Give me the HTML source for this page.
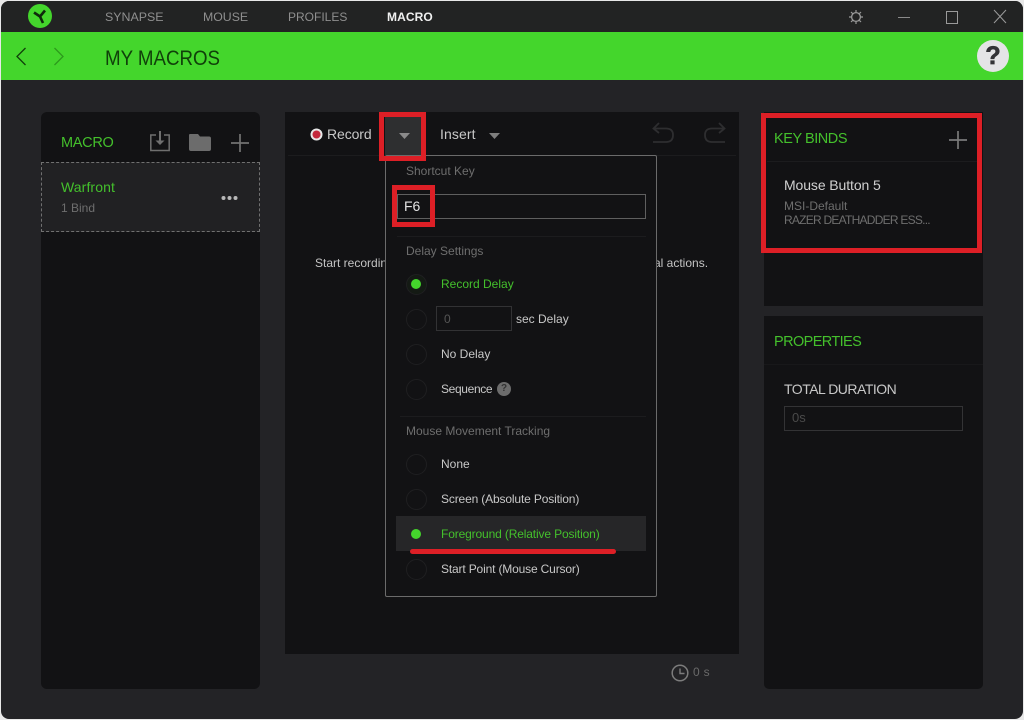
<!DOCTYPE html>
<html><head><meta charset="utf-8"><title>Macro</title>
<style>
html,body{margin:0;padding:0;background:#d8d8d8;}
#w{position:relative;width:1024px;height:720px;overflow:hidden;background:#e8e8e8;font-family:"Liberation Sans",sans-serif;}
#w div,#w span.t{position:absolute;white-space:nowrap;}
.t{position:absolute;white-space:nowrap;line-height:16px;}
.g{color:#44c02c}
.w{color:#c8c8c8}
.m{color:#6e6e6e}
.p{background:#121214}
.r{border:1px solid #1f1f21;border-radius:50%;width:19px;height:19px;box-sizing:content-box}
.rb{border:5px solid #dd1f26;box-sizing:border-box;background:transparent}
.dot{background:#44d62c;border-radius:50%;width:10px;height:10px}
svg{position:absolute;overflow:visible}
</style></head><body>
<div id="w">
<div style="left:1px;top:1px;width:1022px;height:718px;background:#232326;border-radius:8px;overflow:hidden;">
  <div style="left:0;top:0;width:1022px;height:31px;background:#222323"></div>
  <div style="left:0;top:31px;width:1022px;height:48px;background:#44d62c"></div>
</div>

<!-- logo -->
<svg style="left:28px;top:4px" width="24" height="24" viewBox="0 0 24 24"><circle cx="12" cy="12" r="12" fill="#44d62c"/><path d="M12 12.500L6 8.500M12 12.500L17 6.500M12 12.500L15 19" stroke="#0f2a0c" stroke-width="2.600" fill="none"/></svg>

<span class="t" style="left:105px;top:9px;font-size:12.400px;color:#8f8f8f">SYNAPSE</span>
<span class="t" style="left:203px;top:9px;font-size:12.300px;color:#8f8f8f">MOUSE</span>
<span class="t" style="left:288px;top:9px;font-size:12px;color:#8f8f8f">PROFILES</span>
<span class="t" style="left:387px;top:9px;font-size:12px;color:#f0f0f0;font-weight:bold;letter-spacing:.1px">MACRO</span>

<!-- window controls -->
<svg style="left:849px;top:10px" width="14" height="14" viewBox="0 0 14 14"><circle cx="7" cy="7" r="4.400" fill="none" stroke="#9a9a9a" stroke-width="1.300"/><path d="M7 0v2.200M7 11.800V14M0 7h2.200M11.800 7H14M2 2l1.600 1.600M10.400 10.400L12 12M2 12l1.600-1.600M10.400 3.600L12 2" stroke="#9a9a9a" stroke-width="1.200"/></svg>
<div style="left:898px;top:17px;width:12px;height:1px;background:#8a8a8a"></div>
<div style="left:946px;top:11px;width:10px;height:11px;border:1px solid #9a9a9a"></div>
<svg style="left:994px;top:10px" width="12" height="13" viewBox="0 0 12 13"><path d="M0 0L12 13M12 0L0 13" stroke="#9a9a9a" stroke-width="1"/></svg>

<!-- green bar -->
<svg style="left:16px;top:47px" width="10" height="20" viewBox="0 0 10 20"><path d="M9.500 1L1 9.500L9.500 18" stroke="#10400a" stroke-width="1.300" fill="none"/></svg>
<svg style="left:54px;top:47px" width="10" height="20" viewBox="0 0 10 20"><path d="M.5 1L9 9.500L.5 18" stroke="#2c9a1c" stroke-width="1.300" fill="none"/></svg>
<span class="t" style="left:105px;top:46px;font-size:21.500px;line-height:24px;color:#10400a;transform:scaleX(.87);transform-origin:0 0">MY MACROS</span>
<svg style="left:977px;top:40px" width="32" height="32" viewBox="0 0 32 32"><circle cx="16" cy="16" r="16" fill="#e4e4e6"/></svg>
<span class="t" style="left:977px;top:40px;width:32px;text-align:center;font-size:25px;line-height:32px;font-weight:bold;color:#333336;-webkit-text-stroke:.7px #333336">?</span>

<!-- left panel -->
<div class="p" style="left:41px;top:112px;width:219px;height:577px;border-radius:6px"></div>
<span class="t g" style="left:61px;top:135px;font-size:14.500px;letter-spacing:-.3px">MACRO</span>
<svg style="left:150px;top:130px" width="20" height="22" viewBox="0 0 20 22"><path d="M6 5H.8V20.500H19.200V5H14" stroke="#6f6f6f" stroke-width="1.500" fill="none"/><path d="M10 1V12" stroke="#6f6f6f" stroke-width="2"/><path d="M5.500 10.500H14.500L10 15Z" fill="#6f6f6f"/></svg>
<svg style="left:189px;top:134px" width="22" height="18" viewBox="0 0 22 18"><path d="M1 0H9L11 2.500H20Q22 2.500 22 4.500V15Q22 17 20 17H2Q0 17 0 15V1Q0 0 1 0Z" fill="#6c6c6c"/></svg>
<svg style="left:231px;top:134px" width="18" height="18" viewBox="0 0 18 18"><path d="M9 0V18M0 9H18" stroke="#727272" stroke-width="1.700"/></svg>
<div style="left:41px;top:162px;width:219px;height:70px;box-sizing:border-box;border:1px dashed #707070;background:#212123"></div>
<span class="t g" style="left:61px;top:179px;font-size:14px;letter-spacing:.1px">Warfront</span>
<span class="t m" style="left:61px;top:200px;font-size:12px;">1 Bind</span>
<svg style="left:221px;top:195px" width="17" height="6" viewBox="0 0 17 6"><circle cx="2.500" cy="3" r="2" fill="#b8b8b8"/><circle cx="8.500" cy="3" r="2" fill="#b8b8b8"/><circle cx="14.500" cy="3" r="2" fill="#b8b8b8"/></svg>

<!-- center panel -->
<div class="p" style="left:285px;top:112px;width:454px;height:542px"></div>
<div style="left:288px;top:155px;width:448px;height:1px;background:#1c1c1e"></div>
<svg style="left:310px;top:128px" width="13" height="13" viewBox="0 0 13 13"><circle cx="6.500" cy="6.500" r="6" fill="#e8e8e8"/><circle cx="6.500" cy="6.500" r="4" fill="#c4283c"/></svg>
<span class="t" style="left:327px;top:126px;font-size:14px;color:#c8c8c8;letter-spacing:-.1px">Record</span>
<div style="left:385px;top:117px;width:36px;height:38px;background:#2e2f30"></div>
<svg style="left:399px;top:133px" width="11" height="6" viewBox="0 0 11 6"><path d="M0 0H11L5.500 6Z" fill="#8a8a8a"/></svg>
<span class="t" style="left:440px;top:126px;font-size:14px;color:#c8c8c8;letter-spacing:.1px">Insert</span>
<svg style="left:489px;top:133px" width="11" height="6" viewBox="0 0 11 6"><path d="M0 0H11L5.500 6Z" fill="#7e7e7e"/></svg>
<svg style="left:652px;top:122px" width="22" height="22" viewBox="0 0 22 22"><path d="M7 1L1.500 6.500L7 11M2 6.500H14Q21 6.500 21 13Q21 20 14 20H1" stroke="#2e2e30" stroke-width="1.800" fill="none"/></svg>
<svg style="left:704px;top:122px" width="22" height="22" viewBox="0 0 22 22"><path d="M15 1L20.500 6.500L15 11M20 6.500H8Q1 6.500 1 13Q1 20 8 20H21" stroke="#2e2e30" stroke-width="1.800" fill="none"/></svg>
<span class="t" style="left:315px;top:255px;font-size:12px;color:#c4c4c4">Start recording</span>
<span class="t" style="left:654px;top:255px;font-size:12px;color:#c4c4c4">al actions.</span>
<svg style="left:671px;top:664px" width="18" height="18" viewBox="0 0 18 18"><circle cx="9" cy="9" r="7.800" fill="none" stroke="#7c7c7c" stroke-width="1.500"/><path d="M9 4.500V9.500H13.500" stroke="#7c7c7c" stroke-width="1.400" fill="none"/></svg>
<span class="t" style="left:693px;top:664px;font-size:12px;color:#6a6a6a;letter-spacing:.3px">0 s</span>

<!-- dropdown -->
<div style="left:385px;top:155px;width:272px;height:442px;box-sizing:border-box;border:1px solid #6b6b6b;border-radius:2px;background:#121214"></div>
<span class="t m" style="left:406px;top:163px;font-size:12px">Shortcut Key</span>
<div style="left:397px;top:194px;width:249px;height:25px;box-sizing:border-box;border:1px solid #5f5f5f"></div>
<span class="t" style="left:404px;top:198px;font-size:14px;color:#e2e2e2">F6</span>
<div style="left:397px;top:236px;width:249px;height:1px;background:#1c1c1e"></div>
<span class="t m" style="left:406px;top:243px;font-size:12px">Delay Settings</span>

<div class="r" style="left:406px;top:274px;background:#141a14"></div>
<div class="dot" style="left:411px;top:279px"></div>
<span class="t g" style="left:441px;top:276px;font-size:12px">Record Delay</span>

<div class="r" style="left:406px;top:309px"></div>
<div style="left:436px;top:306px;width:76px;height:25px;box-sizing:border-box;border:1px solid #323234"></div>
<span class="t" style="left:444px;top:311px;font-size:12px;color:#555">0</span>
<span class="t w" style="left:516px;top:311px;font-size:12px">sec Delay</span>

<div class="r" style="left:406px;top:344px"></div>
<span class="t w" style="left:441px;top:346px;font-size:12px">No Delay</span>

<div class="r" style="left:406px;top:379px"></div>
<span class="t w" style="left:441px;top:381px;font-size:12px;letter-spacing:-.35px">Sequence</span>
<svg style="left:497px;top:382px" width="14" height="14" viewBox="0 0 14 14"><circle cx="7" cy="7" r="7" fill="#6c6c6c"/></svg>
<span class="t" style="left:497px;top:382px;width:14px;text-align:center;font-size:10px;line-height:14px;color:#333;font-weight:bold">?</span>

<div style="left:400px;top:416px;width:246px;height:1px;background:#1c1c1e"></div>
<span class="t m" style="left:406px;top:423px;font-size:12px">Mouse Movement Tracking</span>

<div class="r" style="left:406px;top:454px"></div>
<span class="t w" style="left:441px;top:456px;font-size:12px">None</span>
<div class="r" style="left:406px;top:489px"></div>
<span class="t w" style="left:441px;top:491px;font-size:12px;letter-spacing:-.15px">Screen (Absolute Position)</span>

<div style="left:396px;top:516px;width:250px;height:35px;background:#262628"></div>
<div class="dot" style="left:411px;top:529px"></div>
<span class="t g" style="left:441px;top:526px;font-size:12px;letter-spacing:-.14px">Foreground (Relative Position)</span>
<div style="left:410px;top:549px;width:206px;height:5px;border-radius:3px;background:#dd1f26"></div>

<div class="r" style="left:406px;top:559px"></div>
<span class="t w" style="left:441px;top:561px;font-size:12px;letter-spacing:-.16px">Start Point (Mouse Cursor)</span>

<!-- right panels -->
<div class="p" style="left:764px;top:112px;width:219px;height:194px"></div>
<div style="left:767px;top:161px;width:210px;height:1px;background:#1c1c1e"></div>
<span class="t g" style="left:774px;top:131px;font-size:14.500px;letter-spacing:-.45px">KEY BINDS</span>
<svg style="left:949px;top:131px" width="18" height="18" viewBox="0 0 18 18"><path d="M9 0V18M0 9H18" stroke="#7a7a7a" stroke-width="1.700"/></svg>
<span class="t" style="left:784px;top:177px;font-size:14px;color:#d0d0d0;letter-spacing:-.1px">Mouse Button 5</span>
<span class="t m" style="left:784px;top:198px;font-size:12px">MSI-Default</span>
<span class="t m" style="left:784px;top:212px;font-size:12px;letter-spacing:-.75px">RAZER DEATHADDER ESS...</span>

<div class="p" style="left:764px;top:316px;width:219px;height:373px;border-radius:0 0 5px 5px"></div>
<div style="left:764px;top:364px;width:219px;height:1px;background:#18181a"></div>
<span class="t g" style="left:774px;top:334px;font-size:14.500px;letter-spacing:-.6px">PROPERTIES</span>
<span class="t w" style="left:784px;top:381px;font-size:14px;letter-spacing:-.5px">TOTAL DURATION</span>
<div style="left:784px;top:406px;width:179px;height:25px;box-sizing:border-box;border:1px solid #333335"></div>
<span class="t" style="left:792px;top:410px;font-size:13px;color:#4a4a4a">0s</span>

<!-- red annotation boxes -->
<div class="rb" style="left:379px;top:112px;width:47px;height:49px"></div>
<div class="rb" style="left:392px;top:185px;width:43px;height:42px"></div>
<div class="rb" style="left:761px;top:113px;width:221px;height:140px"></div>
</div>
</body></html>
